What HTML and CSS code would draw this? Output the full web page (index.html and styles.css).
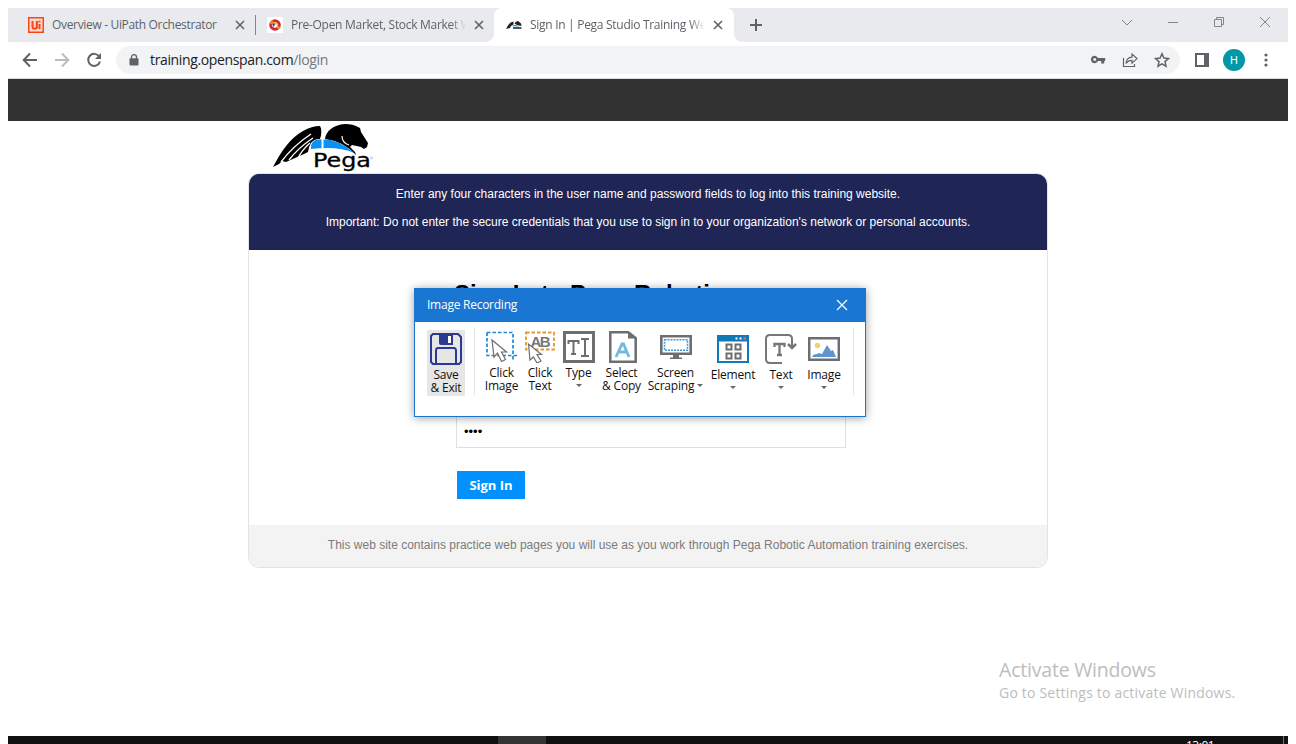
FILE: index.html
```html
<!DOCTYPE html>
<html lang="en">
<head>
<meta charset="utf-8">
<title>Sign In | Pega Studio Training Website</title>
<link rel="stylesheet" href="styles.css">
</head>
<body>
<div class="desktop">
  <div class="tabstrip">
    <div class="tab tab-first">
      <svg class="favicon" viewBox="0 0 16 16"><rect width="16" height="16" fill="#fa4616"/><rect x="1.5" y="1.5" width="13" height="13" fill="#fbd9d0"/><path d="M4.500 4v5.200q0 2.600 2.200 2.600t2.200-2.600V4M11.500 7v5M11.500 3.700v1.800" fill="none" stroke="#fa4616" stroke-width="2"/></svg>
      <span class="tab-title t1">Overview - UiPath Orchestrator</span>
      <svg class="tab-close" viewBox="0 0 10 10"><path d="M1 1l8 8M9 1l-8 8"/></svg>
    </div>
    <div class="tab tab-second">
      <svg class="favicon" viewBox="0 0 16 16"><rect width="16" height="16" fill="#fff"/><circle cx="8" cy="8" r="4.300" fill="none" stroke="#d8233c" stroke-width="3"/><path d="M3.800 7A4.200 4.200 0 0 1 6 4.300M10.500 11.500a4 4 0 0 0 1.700-2" fill="none" stroke="#f08a24" stroke-width="3"/><path d="M6 5.500l3-.5 2.500 3L10 10z" fill="#f4c430"/><path d="M5.300 7l2-1 1 2-1.500 2z" fill="#3b3480"/><path d="M7.500 7.500h2v2h-2z" fill="#fff"/></svg>
      <span class="tab-title t2">Pre-Open Market, Stock Market Watch</span>
      <svg class="tab-close" viewBox="0 0 10 10"><path d="M1 1l8 8M9 1l-8 8"/></svg>
    </div>
    <div class="tab tab-active">
      <svg class="favicon" viewBox="0 0 16 16"><path d="M0 12Q3 5 7.500 4.500V7.500L5 9l-1 2-2 .5z" fill="#222"/><path d="M8.500 6.500Q9.500 4 12 4L15 6.500 15.500 9 13 8.500 11 8z" fill="#222"/><path d="M6 9.300Q9 6.500 13.500 9.500z" fill="#1592ee"/><path d="M7 11h8.500" stroke="#444" stroke-width="1.800"/></svg>
      <span class="tab-title t3">Sign In | Pega Studio Training Website</span>
      <svg class="tab-close" viewBox="0 0 10 10"><path d="M1 1l8 8M9 1l-8 8"/></svg>
    </div>
    <svg class="new-tab" viewBox="0 0 12 12"><path d="M6 0v12M0 6h12"/></svg>
    <div class="window-controls">
      <svg viewBox="0 0 12 12"><path d="M1 4l5 5 5-5"/></svg>
      <svg viewBox="0 0 12 12"><path d="M1 6.500h10"/></svg>
      <svg viewBox="0 0 12 12"><path d="M1.500 3.500h7v7h-7zM3.500 3.500v-2h7v7h-2"/></svg>
      <svg viewBox="0 0 12 12"><path d="M1 1l10 10M11 1L1 11"/></svg>
    </div>
  </div>

  <div class="toolbar">
    <svg class="nav" viewBox="0 0 16 16"><path d="M15 8H2M8 1.500L1.700 8 8 14.500"/></svg>
    <svg class="nav nav-off" viewBox="0 0 16 16"><path d="M1 8h13M8 1.500L14.300 8 8 14.500"/></svg>
    <svg class="nav" viewBox="0 0 16 16"><path d="M13.200 4.500A6 6 0 1 0 14 9.500"/><path class="solid" d="M15 1v6H9z"/></svg>
    <div class="omnibox">
      <svg class="lock" viewBox="0 0 10 12"><path d="M2.500 5V3.200a2.500 2.500 0 0 1 5 0V5" fill="none" stroke="#5f6368" stroke-width="1.300"/><rect x=".5" y="4.300" width="9" height="7.200" rx="1" fill="#5f6368"/></svg>
      <span class="url">training.openspan.com<span class="path">/login</span></span>
      <div class="omni-icons">
        <svg viewBox="0 0 16 16"><path fill-rule="evenodd" d="M8 6h7.200v3h-1v2.500h-3V9H8A3.700 3.700 0 1 1 8 6zM4.700 6.100a1.500 1.500 0 1 0 .01 0z" fill="#5f6368"/></svg>
        <svg viewBox="0 0 16 16"><path d="M1.500 6v8.500h11V12" class="line"/><path d="M4 11.500Q4.500 5.500 10 5.200V2l5 4.600-5 4.600V8.300Q6 8.300 4 11.500z" class="line"/></svg>
        <svg viewBox="0 0 16 16"><path d="M8 1.800l1.900 4.300 4.600.4-3.500 3.100 1 4.600L8 11.800l-4 2.400 1-4.600L1.500 6.500l4.600-.4z" class="star"/></svg>
      </div>
    </div>
    <svg class="panel-icon" viewBox="0 0 14 14"><path fill-rule="evenodd" d="M0 0h14v14H0zM2 2v10h7V2z" fill="#5f6368"/></svg>
    <div class="avatar">H</div>
    <svg class="kebab" viewBox="0 0 4 14"><circle cx="2" cy="2" r="1.600"/><circle cx="2" cy="7" r="1.600"/><circle cx="2" cy="12" r="1.600"/></svg>
  </div>

  <div class="site-bar"></div>
  <main class="site">
    <svg class="pega-logo" viewBox="0 0 100 50">
      <path d="M0 43C8 28 17 14 30 7Q39 2 47 2Q50 7 47 15Q41 15 38 19Q36 22 35 28L31 30 22 34 13 38 9 37 6 40z" fill="#000"/>
      <path d="M8 38Q20 22 38 10M16 36Q25 24 40 14M25 34Q29 26 37 19" stroke="#fff" stroke-width="1.300" fill="none"/>
      <path d="M52 15C53 7 60 1 72 0Q80 0 85 3L87 4 88 8 95 19 94 23 91 25 88 23 79 21 77 23 82 28 83 31Q70 17 52 15z" fill="#000"/>
      <path d="M69 12Q69 19 76 21" stroke="#fff" stroke-width="1.200" fill="none"/>
      <path d="M38 25Q37 16 46 15.500Q64 14 81 29Q66 22 38 25z" fill="#0a91f7"/>
      <path d="M49.500 3v21" stroke="#fff" stroke-width="2"/>
      <text x="40" y="43" textLength="58" lengthAdjust="spacingAndGlyphs">Pega</text>
      <circle cx="98.500" cy="34" r="1" fill="none" stroke="#aaa" stroke-width=".6"/>
    </svg>
    <section class="card">
      <header class="notice">
        <p>Enter any four characters in the user name and password fields to log into this training website.</p>
        <p>Important: Do not enter the secure credentials that you use to sign in to your organization's network or personal accounts.</p>
      </header>
      <form class="login">
        <h1>Sign In to Pega Robotics</h1>
        <div class="password">••••</div>
        <button type="button" class="submit">Sign In</button>
      </form>
      <footer class="card-foot">This web site contains practice web pages you will use as you work through Pega Robotic Automation training exercises.</footer>
    </section>
  </main>
  <div class="taskbar"><span class="task"></span><span class="clock">13:01</span><span class="peek"></span></div>
</div>

<div class="watermark"><div class="w1">Activate Windows</div><div class="w2">Go to Settings to activate Windows.</div></div>

<div class="recorder">
  <div class="rec-title"><span>Image Recording</span><svg viewBox="0 0 12 12"><path d="M1 1l10 10M11 1L1 11"/></svg></div>
  <div class="rec-body">
    <div class="tool save">
      <svg viewBox="0 0 32 32" fill="none" stroke="#2b3990" stroke-width="2"><path d="M3 1h25l3 3v25l-2 2H3l-2-2V3z"/><path d="M6 31V18q0-3 2-3h16q2 0 2 3v13"/><path d="M9 1h14v11H11q-2 0-2-2z" fill="#2b3990" stroke="none"/><path d="M18 3h3v7h-3z" fill="#fff" stroke="none"/></svg>
      <span>Save<br>&amp; Exit</span>
    </div>
    <div class="rule"></div>
    <div class="tool click-image">
      <svg viewBox="0 0 32 32" fill="none"><path d="M1 1.500h26v29M1 1.500V24.500h31" stroke="#1e88d2" stroke-width="1.700" stroke-dasharray="3.500 2"/><path d="M6 9l2 17 3.500-4 4 8.500 4-2-4-7.500h5z" fill="#fff" stroke="#6d6e71" stroke-width="1.200"/></svg>
      <span>Click<br>Image</span>
    </div>
    <div class="tool click-text">
      <svg viewBox="0 0 32 32" fill="none"><path d="M2 1.500h28v17H2z" stroke="#e09a2b" stroke-width="1.800" stroke-dasharray="3.500 2"/><text x="6.500" y="15.500" class="ab" textLength="20">AB</text><path d="M4.500 13l1.500 16 3.500-3 3.500 6 4-2-4-6.500h4.500z" fill="#fff" stroke="#6d6e71" stroke-width="1.200"/></svg>
      <span>Click<br>Text</span>
    </div>
    <div class="tool type">
      <svg viewBox="0 0 32 32" fill="none" stroke="#6d6e71"><path d="M1.500 1.500h29v29h-29z" stroke-width="3"/><path d="M5.500 13v-3h10v3M10.500 10v13M8 23h5M18 8h3l1 1 1-1h3M22 9v15M18 25h3l1-1 1 1h3" stroke-width="2"/></svg>
      <span>Type</span><i class="arrow"></i>
    </div>
    <div class="tool select">
      <svg viewBox="0 0 32 32" fill="none"><path d="M4.300 1.300h18L29.700 7v23.700H4.300z" stroke="#6d6e71" stroke-width="2.500"/><path d="M22 1v6.500h8z" fill="#6d6e71"/><path d="M10 26l6-13h1.500L23 26M12.500 21h9" stroke="#72b9df" stroke-width="2.800"/></svg>
      <span>Select<br>&amp; Copy</span>
    </div>
    <div class="tool scraping">
      <svg viewBox="0 0 32 32" fill="none"><path d="M1.300 5.300h29.400v17.400H1.300z" stroke="#6d6e71" stroke-width="2.600"/><path d="M4.500 8.800h23v10.500h-23z" stroke="#3a9ad9" stroke-width="1.500" stroke-dasharray="2 1"/><path d="M13 24h6v2.500h3V28H10v-1.500h3z" fill="#6d6e71"/></svg>
      <span>Screen<br>Scraping<i class="arrow inline"></i></span>
    </div>
    <div class="tool low element">
      <svg viewBox="0 0 32 32" fill="none"><path d="M0 2h32v28H0z" fill="#0f7ab8"/><path d="M2 8.500h28V28H2z" fill="#fff"/><path d="M9.500 11.500h5v5h-5zM18.500 11.500h5v5h-5zM9.500 20.500h5v5h-5zM18.500 20.500h5v5h-5z" stroke="#6d6e71" stroke-width="2"/><path d="M18.500 5.500h2M22.500 5.500h2" stroke="#fff" stroke-width="2"/><path d="M26.500 5.500h2.500" stroke="#ef5362" stroke-width="3"/></svg>
      <span>Element</span><i class="arrow"></i>
    </div>
    <div class="tool low text">
      <svg viewBox="0 0 32 32" fill="none" stroke="#75777b"><path d="M17 30H5q-4 0-4-4V6q0-4 4-4h18q4 0 4 4v8" stroke-width="2"/><path d="M23 11l4 4 4-4" stroke-width="2.500"/><path d="M9.500 14v-3h10v3M14.500 11v11M12 22h5" stroke-width="2.300"/></svg>
      <span>Text</span><i class="arrow"></i>
    </div>
    <div class="tool low image">
      <svg viewBox="0 0 32 32" fill="none"><path d="M1.200 5.200h29.600v21.600H1.200z" stroke="#6d6e71" stroke-width="2.500"/><circle cx="9.500" cy="12.500" r="2.700" fill="#f0d56d"/><path d="M4 24q1-3 5-3l2-1 3 1 5-9 4 6 2-1 3 7z" fill="#6094d0"/></svg>
      <span>Image</span><i class="arrow"></i>
    </div>
    <div class="rule rule-end"></div>
  </div>
</div>
</body>
</html>
```

FILE: styles.css
```css
* { box-sizing: border-box; }
html, body { height: 744px; overflow: hidden; background: #fff; }
body { margin: 0; padding: 8px 8px 0; font-family: "Open Sans", "Noto Sans", sans-serif; font-size: 12px; position: relative; }
svg { display: block; flex: none; }
.desktop { display: flex; flex-direction: column; height: 736px; }

.tabstrip { display: flex; height: 34px; background: #e8eaed; align-items: center; }
.tab { display: flex; align-items: center; height: 34px; color: #5f6368; }
.tab-first { width: 248px; padding-left: 20px; position: relative; }
.tab-first::after { content: ""; position: absolute; right: 0; top: 7px; width: 1px; height: 20px; background: #808387; }
.tab-second { width: 238px; padding-left: 11px; }
.tab-active { width: 240px; padding-left: 12px; background: #fff; border-radius: 8px 8px 0 0; position: relative; }
.tab-active::before, .tab-active::after { content: ""; position: absolute; bottom: 0; width: 8px; height: 8px; }
.tab-active::before { left: -8px; background: radial-gradient(circle at 0 0, #e8eaed 7.5px, #fff 8px); }
.tab-active::after { right: -8px; background: radial-gradient(circle at 100% 0, #e8eaed 7.5px, #fff 8px); }
.favicon { width: 16px; height: 16px; margin-right: 8px; }
.tab-title { white-space: nowrap; overflow: hidden; line-height: 18px; }
.t1 { width: 171px; margin-right: 12px; letter-spacing: -.33px; }
.t2 { width: 175px; margin-right: 8px; letter-spacing: -.29px; -webkit-mask-image: linear-gradient(90deg, #000 160px, transparent); }
.t3 { width: 175px; margin-right: 8px; letter-spacing: -.29px; -webkit-mask-image: linear-gradient(90deg, #000 160px, transparent); }
.tab-close { width: 10px; height: 10px; fill: none; stroke: #5f6368; stroke-width: 1.6; }
.new-tab { width: 12px; height: 12px; margin-left: 16px; fill: none; stroke: #5f6368; stroke-width: 2; }
.window-controls { display: flex; gap: 34px; margin-left: auto; padding: 0 17px 6px 0; }
.window-controls svg { width: 12px; height: 12px; fill: none; stroke: #84868a; stroke-width: 1; }

.toolbar { display: flex; align-items: center; height: 37px; border-bottom: 1px solid #dadce0; padding-left: 14px; }
.nav { width: 16px; height: 16px; margin-right: 16px; fill: none; stroke: #5f6368; stroke-width: 2; }
.nav:nth-child(3) { margin-right: 14px; }
.nav-off { stroke: #babcbe; }
.nav .solid { fill: #5f6368; stroke: none; }
.omnibox { display: flex; align-items: center; width: 1064px; height: 28px; border-radius: 14px; background: #f1f3f4; padding-left: 13px; }
.lock { width: 10px; height: 12px; }
.url { margin-left: 11px; font-size: 14px; line-height: 20px; color: #202124; letter-spacing: -.36px; }
.path { color: #74777b; }
.omni-icons { display: flex; gap: 16px; margin-left: auto; padding-right: 10px; }
.omni-icons svg { width: 16px; height: 16px; }
.line { fill: none; stroke: #5f6368; stroke-width: 1.2; }
.star { fill: none; stroke: #5f6368; stroke-width: 1.5; }
.panel-icon { width: 14px; height: 14px; margin-left: 15px; }
.avatar { width: 22px; height: 22px; margin-left: 14px; border-radius: 50%; background: #0097a7; color: #fff; font: 11px/23px Roboto, sans-serif; text-align: center; }
.kebab { width: 4px; height: 14px; margin-left: 19px; fill: #5f6368; }

.site-bar { height: 42px; background: #323232; flex: none; }
.site { flex: 1; }
.pega-logo { width: 100px; height: 50px; margin: 3px 0 -1px 265px; overflow: visible; }
.pega-logo text { font: 19px "DejaVu Sans", sans-serif; fill: #000; stroke: #000; stroke-width: .3; }
.card { width: 800px; height: 395px; margin-left: 240px; border: 1px solid #e3e3e3; border-radius: 11px; overflow: hidden; font-family: "Liberation Sans", Arial, sans-serif; }
.notice { height: 76px; background: #1f2555; color: #fff; padding-top: 6px; text-align: center; line-height: 28px; }
.notice p { margin: 0; }
.login { height: 275px; padding: 24px 0 0 207px; }
h1 { margin: 0 0 0 -2px; font-size: 24px; line-height: 40px; height: 88px; color: #000; }
.password { width: 390px; height: 32px; margin-top: 54px; border: 1px solid #e0e0e0; padding: 0 7px; font-size: 13px; line-height: 29px; }
.submit { display: block; width: 68px; height: 28px; margin: 23px 0 0 1px; padding: 0; border: 0; background: #0091ff; color: #fff; font: bold 13px/28px "Open Sans", sans-serif; }
.card-foot { height: 43px; background: #f3f3f3; color: #7b7b7b; text-align: center; line-height: 41px; }

.taskbar { height: 8px; background: #101010; display: flex; overflow: hidden; flex: none; }
.task { width: 48px; margin-left: 490px; background: #343434; }
.clock { margin-left: 640px; color: #fff; line-height: 18px; letter-spacing: -.5px; padding-top: 1px; }
.peek { margin-left: auto; margin-right: 4px; width: 1px; background: #777; }

.watermark { position: absolute; left: 999px; top: 657px; color: #bdbdbd; white-space: nowrap; }
.w1 { font-size: 19.5px; line-height: 26px; letter-spacing: -.2px; }
.w2 { font-size: 14px; line-height: 20px; letter-spacing: .2px; }

.recorder { position: absolute; left: 414px; top: 288px; width: 452px; height: 129px; border: 1px solid #1976d2; background: #fff; box-shadow: 0 1px 9px rgba(0,0,0,.38); }
.rec-title { height: 33px; background: #1976d2; color: #fff; display: flex; align-items: center; justify-content: space-between; padding: 0 17px 2px 12px; line-height: 18px; letter-spacing: -.25px; }
.rec-title svg { width: 12px; height: 12px; fill: none; stroke: #fff; stroke-width: 1.2; }
.rec-body { display: flex; padding: 8px 0 0 12px; color: #111; }
.tool { display: flex; flex-direction: column; align-items: center; flex: none; line-height: 13px; letter-spacing: -.2px; text-align: center; white-space: nowrap; padding-top: 1px; height: 66px; }
.tool svg { width: 32px; height: 32px; margin-bottom: 3px; }
.save { width: 38px; background: #e6e6e6; padding-top: 3px; }
.rule { width: 1px; height: 67px; margin: -2px 8px 0 9px; background: #e5e5e5; }
.click-image { width: 37px; }
.click-text { width: 40px; }
.type { width: 37px; }
.select { width: 49px; }
.scraping { width: 59px; }
.element { width: 56px; }
.text { width: 40px; }
.image { width: 46px; }
.low { padding-top: 3px; }
.rule-end { margin: -2px 0 0 6px; }
.arrow { width: 0; height: 0; margin-top: 5px; border: 3px solid transparent; border-top-color: #666; border-bottom: 0; }
.inline { display: inline-block; margin: 0 0 3px 3px; }
.ab { font: bold 15px "Liberation Sans", sans-serif; fill: #75777b; }
```
